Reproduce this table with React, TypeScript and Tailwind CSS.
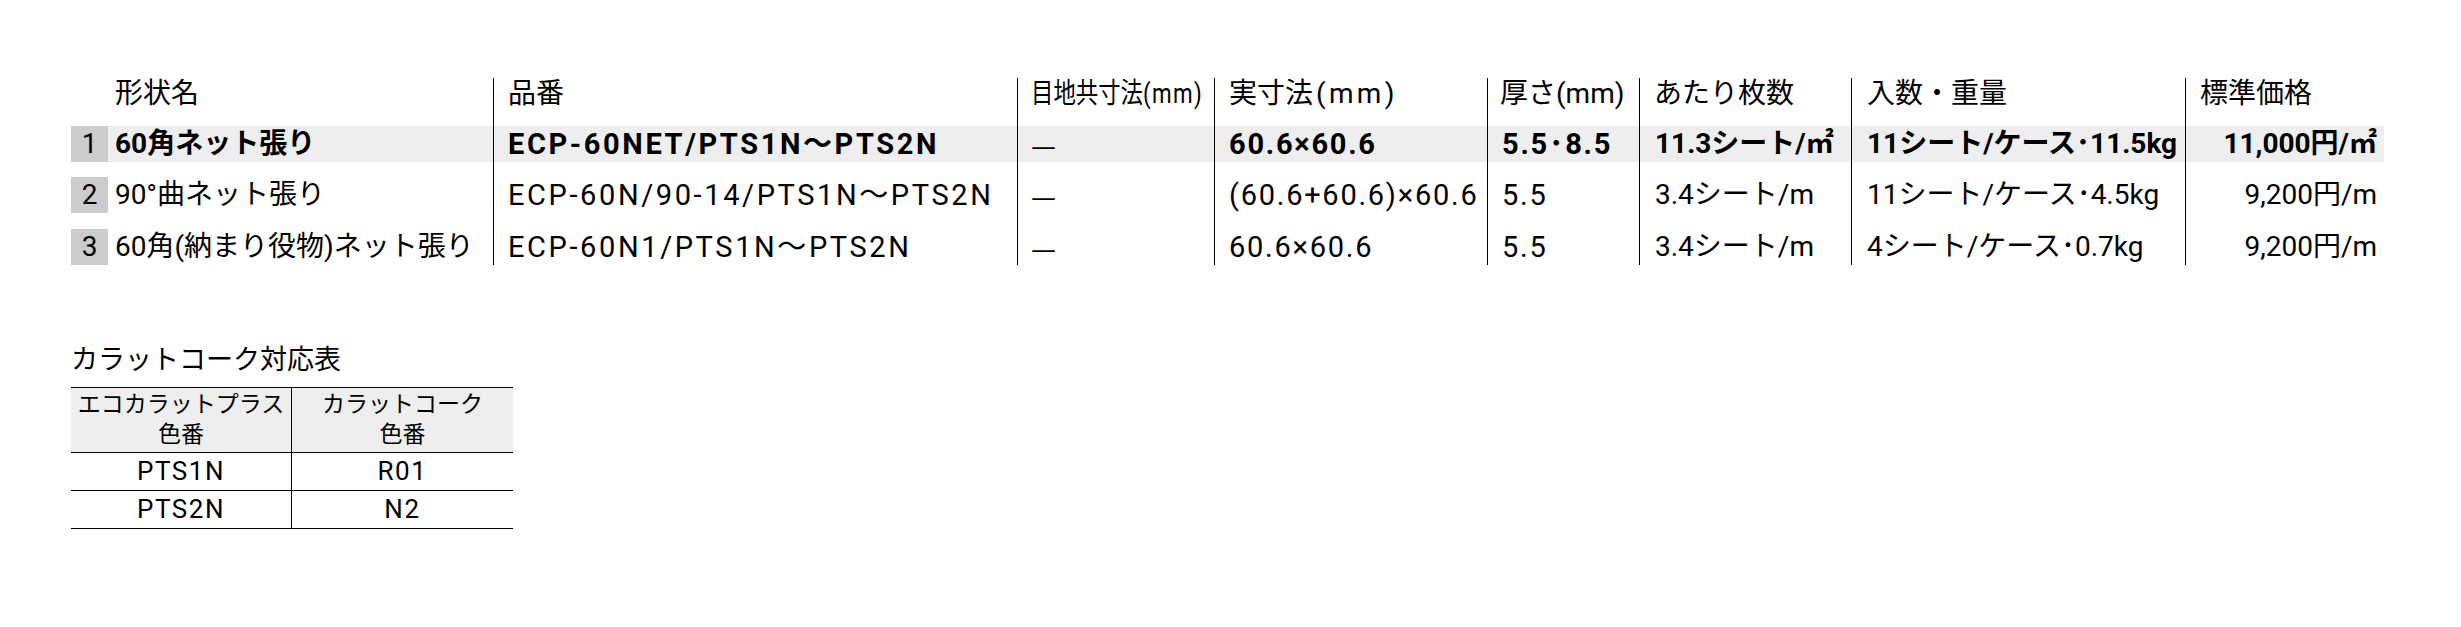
import type { ReactNode } from 'react'

interface Row {
  no: string
  name: string
  code: string
  joint: string
  size: string
  thick: string
  per: ReactNode
  pack: string
  price: ReactNode
  bold?: boolean
}

const rows: Row[] = [
  {
    no: '1',
    name: '60角ネット張り',
    code: 'ECP-60NET/PTS1N〜PTS2N',
    joint: '—',
    size: '60.6×60.6',
    thick: '5.5･8.5',
    per: '11.3シート/㎡',
    pack: '11シート/ケース･11.5kg',
    price: '11,000円/㎡',
    bold: true,
  },
  {
    no: '2',
    name: '90°曲ネット張り',
    code: 'ECP-60N/90-14/PTS1N〜PTS2N',
    joint: '—',
    size: '(60.6+60.6)×60.6',
    thick: '5.5',
    per: '3.4シート/m',
    pack: '11シート/ケース･4.5kg',
    price: '9,200円/m',
  },
  {
    no: '3',
    name: '60角(納まり役物)ネット張り',
    code: 'ECP-60N1/PTS1N〜PTS2N',
    joint: '—',
    size: '60.6×60.6',
    thick: '5.5',
    per: '3.4シート/m',
    pack: '4シート/ケース･0.7kg',
    price: '9,200円/m',
  },
]

const colorRows = [
  { plus: 'PTS1N', cork: 'R01' },
  { plus: 'PTS2N', cork: 'N2' },
]

function Col({ children, line = true }: { children: ReactNode; line?: boolean }) {
  return <div className={line ? 'border-l border-black' : ''}>{children}</div>
}

export default function App() {
  return (
    <div className="h-[627px] w-full bg-white text-black font-[Roboto,'Noto_Sans_CJK_JP',sans-serif]">
      <div className="pl-[71px] pt-[78px]">
        <div className="grid grid-cols-[37px_385px_524px_197px_273px_152px_212px_334px_199px] grid-rows-[48px_51px_52px_36px] text-[28px] leading-none">
          {/* header */}
          <div />
          <Col line={false}>
            <div className="flex h-[32px] items-center pl-[7px]">形状名</div>
          </Col>
          <Col>
            <div className="flex h-[32px] items-center pl-[14px]">品番</div>
          </Col>
          <Col>
            <div className="flex h-[32px] items-center pl-[13px]">
              <span className="inline-block origin-left scale-x-[0.8] whitespace-nowrap">
                目地共寸法<span className="tracking-[0.06em]">(mm)</span>
              </span>
            </div>
          </Col>
          <Col>
            <div className="flex h-[32px] items-center pl-[14px]">
              実寸法<span className="ml-[3px] tracking-[0.12em]">(mm)</span>
            </div>
          </Col>
          <Col>
            <div className="flex h-[32px] items-center pl-[12px]">厚さ(mm)</div>
          </Col>
          <Col>
            <div className="flex h-[32px] items-center pl-[14px]">あたり枚数</div>
          </Col>
          <Col>
            <div className="flex h-[32px] items-center pl-[15px]">入数・重量</div>
          </Col>
          <Col>
            <div className="flex h-[32px] items-center pl-[14px]">標準価格</div>
          </Col>

          {rows.map((r) => {
            const box = r.bold
              ? 'flex h-[36px] items-center whitespace-nowrap bg-[#eeeeee] font-bold'
              : 'flex h-[36px] items-center whitespace-nowrap'
            return [
              <div key={r.no + 'n'} className="flex h-[36px] items-center justify-center bg-[#cccccc]">
                {r.no}
              </div>,
              <Col key={r.no + 'a'} line={false}>
                <div className={box + ' pl-[7px]'}>{r.name}</div>
              </Col>,
              <Col key={r.no + 'b'}>
                <div className={box + ' pl-[14px] text-[29px] tracking-[0.09em]'}>{r.code}</div>
              </Col>,
              <Col key={r.no + 'c'}>
                <div className={box + ' pl-[13px]'}>
                  <span className="font-['Noto_Sans_CJK_JP'] font-normal">{r.joint}</span>
                </div>
              </Col>,
              <Col key={r.no + 'd'}>
                <div className={box + ' pl-[14px] text-[29px] tracking-[0.06em]'}>{r.size}</div>
              </Col>,
              <Col key={r.no + 'e'}>
                <div className={box + ' pl-[14px] text-[29px] tracking-[0.06em]'}>{r.thick}</div>
              </Col>,
              <Col key={r.no + 'f'}>
                <div className={box + ' pl-[15px]'}>{r.per}</div>
              </Col>,
              <Col key={r.no + 'g'}>
                <div className={box + ' pl-[15px]'}>{r.pack}</div>
              </Col>,
              <Col key={r.no + 'h'}>
                <div className={box + ' justify-end pr-[7px]'}>{r.price}</div>
              </Col>,
            ]
          })}
        </div>

        <div className="mt-[82px] text-[27px] leading-none">カラットコーク対応表</div>

        <div className="mt-[13px] grid w-[442px] grid-cols-[220px_222px] border-y border-black text-center">
          <div className="flex h-[64px] flex-col items-center justify-center bg-[#eeeeee] text-[23px] leading-[30px]">
            <span>エコカラットプラス</span>
            <span>色番</span>
          </div>
          <div className="flex h-[64px] flex-col items-center justify-center border-l border-black bg-[#eeeeee] text-[23px] leading-[30px]">
            <span>カラットコーク</span>
            <span>色番</span>
          </div>
          {colorRows.map((c) => [
            <div key={c.plus} className="flex h-[38px] items-center justify-center border-t border-black text-[26px] tracking-[0.06em]">
              {c.plus}
            </div>,
            <div key={c.cork} className="flex h-[38px] items-center justify-center border-l border-t border-black text-[26px] tracking-[0.06em]">
              {c.cork}
            </div>,
          ])}
        </div>
      </div>
    </div>
  )
}
